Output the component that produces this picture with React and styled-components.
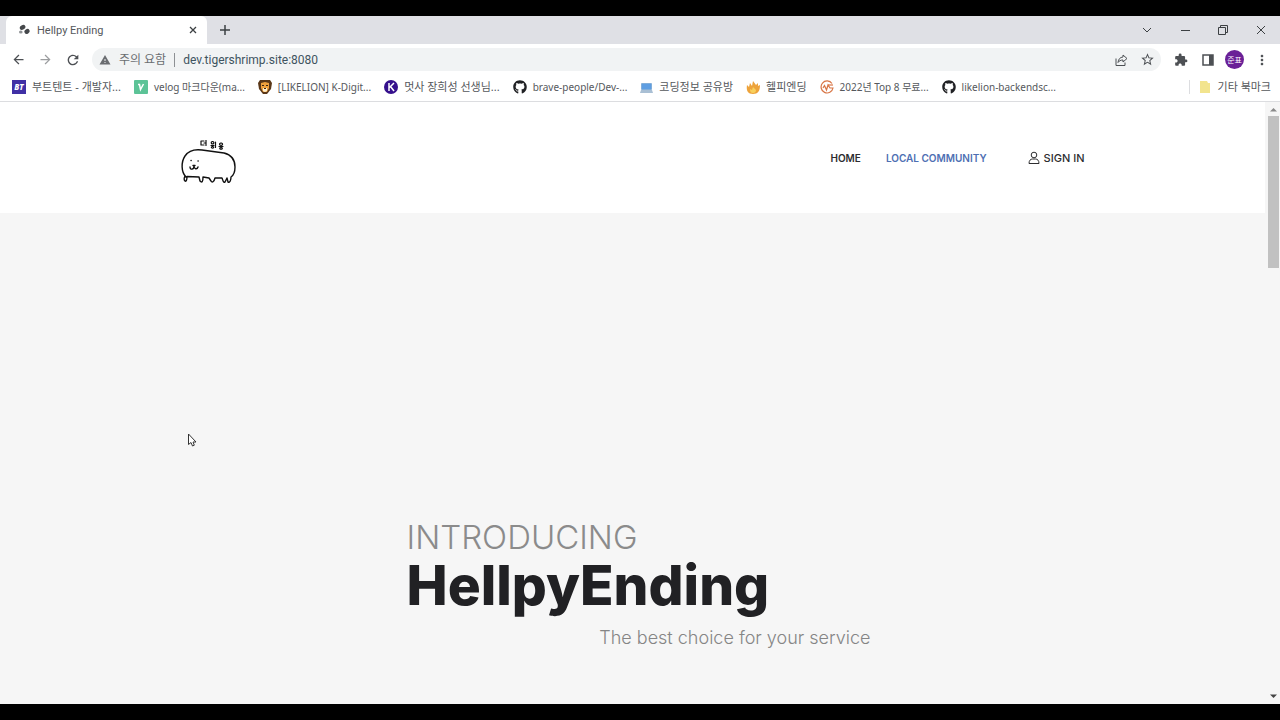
import { createGlobalStyle, styled } from "styled-components";
import { FaGithub } from "react-icons/fa";
import {
  MdArrowBack,
  MdArrowForward,
  MdRefresh,
  MdWarning,
  MdStarBorder,
  MdExtension,
  MdMoreVert,
} from "react-icons/md";

const GlobalStyle = createGlobalStyle`
  * {
    box-sizing: border-box;
  }
  body {
    margin: 0;
    background: #000;
    font-family: Roboto, "Noto Sans CJK KR", sans-serif;
  }
  button {
    display: flex;
    align-items: center;
    justify-content: center;
    padding: 0;
    border: 0;
    background: none;
    color: inherit;
    font: inherit;
  }
  a {
    color: inherit;
    text-decoration: none;
  }
  svg {
    display: block;
    flex-shrink: 0;
  }
`;

const Screen = styled.div`
  display: flex;
  flex-direction: column;
  height: 100vh;
  padding: 16px 0;
`;

const TabStrip = styled.div`
  display: flex;
  align-items: center;
  height: 28px;
  padding-left: 6px;
  background: #dfe0e5;
  color: #3c4043;
`;

const Tab = styled.div`
  display: flex;
  align-items: center;
  gap: 7px;
  width: 201px;
  height: 28px;
  padding: 0 8px 0 12px;
  border-radius: 6px 6px 0 0;
  background: #fff;
  font-size: 11px;
`;

const TabTitle = styled.span`
  flex: 1;
  color: #55585c;
`;

const TabButton = styled.button`
  width: ${(props) => props.$width || 12}px;
  height: 28px;
`;

const WindowButtons = styled.div`
  display: flex;
  margin-left: auto;
`;

const Toolbar = styled.div`
  display: flex;
  align-items: center;
  height: 31px;
  padding: 0 5px;
  background: #fff;
  color: #4d5054;
`;

const ToolButton = styled.button`
  width: 27px;
  height: 24px;
  opacity: ${(props) => (props.disabled ? 0.55 : 1)};
`;

const AddressBar = styled.div`
  display: flex;
  flex: 1;
  align-items: center;
  height: 23px;
  margin: 0 6px;
  padding-left: 7px;
  border-radius: 12px;
  background: #f1f3f4;
  font-size: 12px;
`;

const Warning = styled.label`
  display: flex;
  align-items: center;
  gap: 8px;
  margin-right: 8px;
  padding-right: 8px;
  border-right: 1px solid #8d9094;
  color: #6a6d71;
  line-height: 14px;
`;

const AddressInput = styled.input`
  flex: 1;
  min-width: 0;
  padding: 0;
  border: 0;
  outline: 0;
  background: none;
  color: #40535f;
  font: inherit;
`;

const Profile = styled.button`
  width: 19px;
  height: 19px;
  margin: 0 4px;
  border-radius: 50%;
  background: #6a2097;
  color: #fff;
  font-size: 8px;
`;

const BookmarkBar = styled.nav`
  display: flex;
  align-items: center;
  gap: 13px;
  height: 27px;
  padding: 0 9px 3px 12px;
  border-bottom: 1px solid #dcdde0;
  background: #fff;
  color: #55585c;
  font-family: "Noto Sans", "Noto Sans CJK KR", sans-serif;
  line-height: 14px;
  white-space: nowrap;
`;

const Bookmark = styled.a`
  display: flex;
  align-items: center;
  gap: 6px;
  font-size: ${(props) => (props.$latin ? 10 : 11)}px;
`;

const OtherBookmarks = styled(Bookmark)`
  margin-left: auto;
  padding-left: 8px;
  border-left: 1px solid #dcdde0;
`;

const Viewport = styled.div`
  display: flex;
  flex: 1;
  min-height: 0;
`;

const Page = styled.main`
  display: flex;
  flex: 1;
  flex-direction: column;
  background: #f6f6f6;
  font-family: Inter, sans-serif;
`;

const Header = styled.header`
  height: 111px;
  background: #fff;
`;

const HeaderInner = styled.div`
  display: flex;
  align-items: center;
  max-width: 904px;
  height: 100%;
  margin: 0 auto;
`;

const LogoLink = styled.a`
  padding-top: 10px;
`;

const Menu = styled.nav`
  display: flex;
  align-items: center;
  margin-left: auto;
  color: #2d2d2f;
  font-size: 10px;
  font-weight: 600;
`;

const MenuLink = styled.a`
  margin-left: 25px;
  color: ${(props) => (props.$active ? "#4e6fb3" : "inherit")};
`;

const SignIn = styled.a`
  display: flex;
  align-items: center;
  gap: 4px;
  margin-left: 41px;
  font-size: 11px;
  font-weight: 500;
`;

const Hero = styled.section`
  display: flex;
  flex: 1;
  flex-direction: column;
  justify-content: flex-end;
  width: 476px;
  margin: 0 auto;
  padding: 0 0 54px 12px;
`;

const Introducing = styled.p`
  margin: 0;
  color: #8b8b8b;
  font-size: 33px;
  font-weight: 300;
  line-height: 40px;
`;

const Title = styled.h1`
  margin: 0;
  color: #212124;
  font-size: 55px;
  font-weight: 800;
  line-height: 56px;
`;

const Slogan = styled.p`
  margin: 13px 0 0;
  color: #858585;
  font-size: 18px;
  font-weight: 300;
  line-height: 24px;
  text-align: right;
`;

const ScrollBar = styled.div`
  display: flex;
  flex-direction: column;
  align-items: center;
  justify-content: space-between;
  width: 15px;
  padding: 5px 1px 5px 3px;
  background: #f6f6f6;
`;

const ScrollThumb = styled.div`
  width: 11px;
  height: 152px;
  margin: 4px 0 auto;
  background: #c1c1c1;
`;

const Pointer = styled.svg`
  position: absolute;
  left: 187px;
  top: 433px;
`;

const Favicon = () => (
  <svg width="12" height="12" viewBox="0 0 12 12" fill="#45484b">
    <ellipse cx="4.600" cy="3.400" rx="3" ry="2.200" transform="rotate(-30 4.600 3.400)" />
    <ellipse cx="9" cy="7.400" rx="2.700" ry="2.300" transform="rotate(-30 9 7.400)" />
    <ellipse cx="2.800" cy="8" rx="1.800" ry="1.600" fill="#8d9093" />
  </svg>
);

const Logo = () => (
  <svg
    width="56"
    height="46"
    viewBox="0 0 56 46"
    fill="none"
    stroke="#111"
    strokeWidth="1.4"
    strokeLinecap="round"
    strokeLinejoin="round"
  >
    <path d="M5 37C0 32 0 22 4 16C8 10 14 9 21 10L43 13C51 15 54 20 54 27C54 32 53 35 50 37C50 40 49 43 47 42L46 38L44 42C42 43 42 40 41 38H34C33 42 31 43 30 41L28 38L22 37C22 42 21 43 19 41L18 37L6 36.500C6 40 5 42 4 41C3 40 3 38 4 36" />
    <path d="M9 27C9 30 13 30 13 26C13 29 16 30 17 27" />
    <path d="M10 20.500h.2M17 21h.2M12 25.500h2" />
    <g strokeWidth="1.200">
      <path d="M23 1H20V5H23M23 3H25M25 0V5.500" />
      <path d="M31.500 1.500a1.300 1.200 0 1 0 .1 0M30 5.500H33M31.500 6.500a1.200 .8 0 1 0 .1 0M34.500 2V7.500" />
      <path d="M40 3a1.500 1.200 0 1 0 .1 0M38 6.500H42M40 7.500a1.300 .8 0 1 0 .1 0" />
    </g>
  </svg>
);

const BootTentIcon = () => (
  <svg width="14" height="14" viewBox="0 0 14 14">
    <rect width="14" height="14" fill="#4030a5" />
    <text
      x="7"
      y="10"
      fill="#fff"
      fontSize="8"
      fontWeight="800"
      fontStyle="italic"
      textAnchor="middle"
    >
      BT
    </text>
  </svg>
);

const VelogIcon = () => (
  <svg width="14" height="14" viewBox="0 0 14 14">
    <rect width="14" height="14" rx="1" fill="#5cc397" />
    <path
      d="M4 4.500h1.500l1 5L9.500 4"
      fill="none"
      stroke="#fff"
      strokeWidth="1.500"
    />
  </svg>
);

const LionIcon = () => (
  <svg width="14" height="14" viewBox="0 0 14 14">
    <path d="M2 0h10l2 3-1 6-4 5H5L1 9 0 3z" fill="#5a3718" />
    <path d="M3 3l4-1 4 1v5l-2 4H5L3 8z" fill="#f0a13c" />
    <path d="M5 8h4v3L7 12 5 11z" fill="#fff0cf" />
    <path d="M4 5h2v1H4zM8 5h2v1H8zM6 8h2v1H6z" fill="#392313" />
  </svg>
);

const KIcon = () => (
  <svg width="14" height="14" viewBox="0 0 14 14">
    <circle cx="7" cy="7" r="7" fill="#35108c" />
    <path
      d="M5 3v8M10 3L5.500 7.500M6.500 6.500L10 11"
      fill="none"
      stroke="#fff"
      strokeWidth="1.500"
    />
  </svg>
);

const LaptopIcon = () => (
  <svg width="13" height="14" viewBox="0 0 13 14">
    <rect x="1" y="3" width="11" height="7" rx="1" fill="#82aed9" />
    <rect x="2" y="4" width="9" height="5" fill="#5e9ee2" />
    <path d="M1 10h11l1 3H0z" fill="#a9bfd4" />
  </svg>
);

const FireIcon = () => (
  <svg width="14" height="14" viewBox="0 0 14 14">
    <path
      d="M1 5l2 2 1-4 2 3 1-5 3 4 2-2v3l2-1c0 6-2 9-7 9S0 11 1 5z"
      fill="#eda33b"
    />
    <path d="M4 9l2 1 1-3 2 2 1 1c0 2-1 3-3 3s-3-1-3-4z" fill="#f8d05c" />
  </svg>
);

const PulseIcon = () => (
  <svg
    width="14"
    height="14"
    viewBox="0 0 14 14"
    fill="none"
    stroke="#d87545"
    strokeWidth="1.200"
  >
    <path d="M12 3.500A6 6 0 1 0 13 8H10L8 5 6.500 10 4.500 5.500 3 8" />
    <path d="M8 5h5" />
  </svg>
);

const ShareIcon = () => (
  <svg
    width="14"
    height="14"
    viewBox="0 0 14 14"
    fill="none"
    stroke="currentColor"
    strokeLinejoin="round"
  >
    <path d="M2 5.500V12.500H11V9.500" />
    <path d="M9 2l4 3.500L9 9V7C6.500 7 5 8 4 9.500C4.500 6 6 4.300 9 4z" />
  </svg>
);

const GithubIcon = () => <FaGithub size={14} color="#202124" />;

const bookmarks = [
  { name: "부트텐트 - 개발자...", icon: <BootTentIcon /> },
  { name: "velog 마크다운(ma...", icon: <VelogIcon />, latin: true },
  { name: "[LIKELION] K-Digit...", icon: <LionIcon />, latin: true },
  { name: "멋사 장희성 선생님...", icon: <KIcon /> },
  { name: "brave-people/Dev-...", icon: <GithubIcon />, latin: true },
  { name: "코딩정보 공유방", icon: <LaptopIcon /> },
  { name: "헬피엔딩", icon: <FireIcon /> },
  { name: "2022년 Top 8 무료...", icon: <PulseIcon />, latin: true },
  { name: "likelion-backendsc...", icon: <GithubIcon />, latin: true },
];

const BrowserTabs = () => (
  <TabStrip>
    <Tab>
      <Favicon />
      <TabTitle>Hellpy Ending</TabTitle>
      <TabButton aria-label="Close tab">
        <svg width="8" height="8" stroke="currentColor" strokeWidth="1.300">
          <path d="M1 1l6 6M7 1L1 7" />
        </svg>
      </TabButton>
    </Tab>
    <TabButton $width={36} aria-label="New tab">
      <svg width="10" height="10" stroke="currentColor" strokeWidth="1.500">
        <path d="M5 0v10M0 5h10" />
      </svg>
    </TabButton>
    <WindowButtons>
      <TabButton $width={38} aria-label="Search tabs">
        <svg width="10" height="6" fill="none" stroke="currentColor">
          <path d="M1 1l4 4 4-4" />
        </svg>
      </TabButton>
      <TabButton $width={38} aria-label="Minimize">
        <svg width="9" height="1" fill="currentColor">
          <rect width="9" height="1" />
        </svg>
      </TabButton>
      <TabButton $width={38} aria-label="Restore">
        <svg width="10" height="10" fill="none" stroke="currentColor">
          <path d="M.5 2.500h7v7h-7zM2.500 2.500v-2h7v7h-2" />
        </svg>
      </TabButton>
      <TabButton $width={38} aria-label="Close">
        <svg width="10" height="10" stroke="currentColor">
          <path d="M1 1l8 8M9 1L1 9" />
        </svg>
      </TabButton>
    </WindowButtons>
  </TabStrip>
);

const BrowserToolbar = () => (
  <Toolbar>
    <ToolButton aria-label="Back">
      <MdArrowBack size={15} />
    </ToolButton>
    <ToolButton aria-label="Forward" disabled>
      <MdArrowForward size={15} />
    </ToolButton>
    <ToolButton aria-label="Reload">
      <MdRefresh size={16} />
    </ToolButton>
    <AddressBar>
      <Warning htmlFor="address">
        <MdWarning size={12} />
        주의 요함
      </Warning>
      <AddressInput
        id="address"
        type="text"
        defaultValue="dev.tigershrimp.site:8080"
      />
      <ToolButton aria-label="Share">
        <ShareIcon />
      </ToolButton>
      <ToolButton aria-label="Bookmark this page">
        <MdStarBorder size={15} />
      </ToolButton>
    </AddressBar>
    <ToolButton aria-label="Extensions">
      <MdExtension size={14} />
    </ToolButton>
    <ToolButton aria-label="Side panel">
      <svg width="12" height="12" viewBox="0 0 12 12" fill="none">
        <rect
          x="1"
          y="1"
          width="10"
          height="10"
          stroke="currentColor"
          strokeWidth="1.500"
        />
        <rect x="7" y="1" width="4" height="10" fill="currentColor" />
      </svg>
    </ToolButton>
    <Profile>준표</Profile>
    <ToolButton aria-label="Menu">
      <MdMoreVert size={16} />
    </ToolButton>
  </Toolbar>
);

const App = () => {
  return (
    <Screen>
      <GlobalStyle />
      <BrowserTabs />
      <BrowserToolbar />
      <BookmarkBar>
        {bookmarks.map((bookmark) => (
          <Bookmark href="#" key={bookmark.name} $latin={bookmark.latin}>
            {bookmark.icon}
            {bookmark.name}
          </Bookmark>
        ))}
        <OtherBookmarks href="#">
          <svg width="14" height="14" viewBox="0 0 14 14">
            <path d="M2 1h7l1 2h2v10H2z" fill="#f2e48e" />
          </svg>
          기타 북마크
        </OtherBookmarks>
      </BookmarkBar>
      <Viewport>
        <Page>
          <Header>
            <HeaderInner>
              <LogoLink href="#" aria-label="Home">
                <Logo />
              </LogoLink>
              <Menu>
                <MenuLink href="#">HOME</MenuLink>
                <MenuLink href="#" $active>
                  LOCAL COMMUNITY
                </MenuLink>
                <SignIn href="#">
                  <svg
                    width="12"
                    height="14"
                    viewBox="0 0 12 14"
                    fill="none"
                    stroke="currentColor"
                  >
                    <circle cx="6" cy="4" r="2.800" />
                    <path d="M1 12.500C1 9.500 2.500 8 4.500 8H7.500C9.500 8 11 9.500 11 12.500Z" />
                  </svg>
                  SIGN IN
                </SignIn>
              </Menu>
            </HeaderInner>
          </Header>
          <Hero>
            <Introducing>INTRODUCING</Introducing>
            <Title>HellpyEnding</Title>
            <Slogan>The best choice for your service</Slogan>
          </Hero>
        </Page>
        <ScrollBar>
          <svg width="7" height="5" fill="#8a8a8a">
            <path d="M0 4.500L3.500 1 7 4.500z" />
          </svg>
          <ScrollThumb />
          <svg width="7" height="5" fill="#444">
            <path d="M0 .5L3.500 4 7 .5z" />
          </svg>
        </ScrollBar>
      </Viewport>
      <Pointer width="10" height="14" viewBox="0 0 10 14">
        <path
          d="M1.500 1v10.500L4 9.500l1.500 3.500 1.800-.8L6 9h3z"
          fill="#fff"
          stroke="#333"
        />
      </Pointer>
    </Screen>
  );
};

export default App;
